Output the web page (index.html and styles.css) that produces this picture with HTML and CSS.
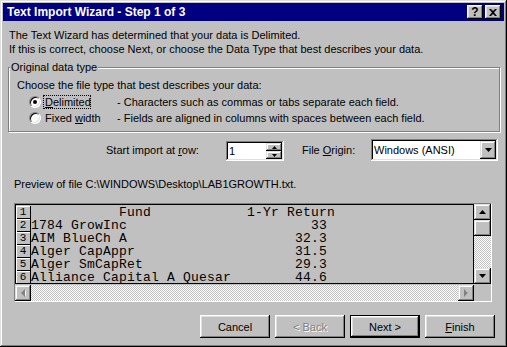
FILE: index.html
```html
<!DOCTYPE html>
<html lang="en">
<head>
  <meta charset="UTF-8">
  <title>Text Import Wizard - Step 1 of 3</title>
  <link rel="stylesheet" href="styles.css">
</head>
<body>

  <div class="window">

    <!-- Title bar -->
    <div class="titlebar">
      <span class="title">Text Import Wizard - Step 1 of 3</span>
      <div class="title-buttons">
        <span class="tbtn help">?</span>
        <span class="tbtn close">
          <svg width="8" height="7" viewBox="0 0 8 7"><path d="M0 0h2l2 2 2-2h2L5 3.5 8 7H6L4 5 2 7H0l3-3.5z" fill="#000"/></svg>
        </span>
      </div>
    </div>

    <div class="intro">
      <p>The Text Wizard has determined that your data is Delimited.</p>
      <p>If this is correct, choose Next, or choose the Data Type that best describes your data.</p>
    </div>

    <!-- Original data type -->
    <fieldset class="group">
      <legend>Original data type</legend>
      <div class="group-body">
        <p>Choose the file type that best describes your data:</p>
        <div class="option">
          <span class="radio checked"></span>
          <span class="opt-label focus"><u>D</u>elimited</span>
          <span class="opt-desc">- Characters such as commas or tabs separate each field.</span>
        </div>
        <div class="option">
          <span class="radio"></span>
          <span class="opt-label">Fixed <u>w</u>idth</span>
          <span class="opt-desc">- Fields are aligned in columns with spaces between each field.</span>
        </div>
      </div>
    </fieldset>

    <div class="import-row">
      <span class="start-label">Start import at <u>r</u>ow:</span>
      <div class="spinner">
        <span class="field-text">1</span>
        <div class="spin-buttons">
          <span class="spin-btn"><svg width="5" height="3" viewBox="0 0 5 3"><path d="M2.5 0L5 3H0z" fill="#000"/></svg></span>
          <span class="spin-btn"><svg width="5" height="3" viewBox="0 0 5 3"><path d="M0 0h5L2.5 3z" fill="#000"/></svg></span>
        </div>
      </div>
      <span class="origin-label">File <u>O</u>rigin:</span>
      <div class="dropdown">
        <span class="field-text">Windows (ANSI)</span>
        <span class="drop-btn"><svg width="7" height="4" viewBox="0 0 7 4"><path d="M0 0h7L3.5 4z" fill="#000"/></svg></span>
      </div>
    </div>

    <p class="preview-label">Preview of file C:\WINDOWS\Desktop\LAB1GROWTH.txt.</p>

    <!-- Preview grid -->
    <div class="preview">
      <div class="data">
        <div class="line"><span class="num">1</span><span class="cells">           Fund            1-Yr Return</span></div>
        <div class="line"><span class="num">2</span><span class="cells">1784 GrowInc                       33</span></div>
        <div class="line"><span class="num">3</span><span class="cells">AIM BlueCh A                     32.3</span></div>
        <div class="line"><span class="num">4</span><span class="cells">Alger CapAppr                    31.5</span></div>
        <div class="line"><span class="num">5</span><span class="cells">Alger SmCapRet                   29.3</span></div>
        <div class="line"><span class="num">6</span><span class="cells">Alliance Capital A Quesar        44.6</span></div>
      </div>
      <div class="vscroll">
        <span class="sb-btn"><svg width="7" height="4" viewBox="0 0 7 4"><path d="M3.5 0L7 4H0z" fill="#000"/></svg></span>
        <span class="sb-btn thumb"></span>
        <span class="trough"></span>
        <span class="sb-btn"><svg width="7" height="4" viewBox="0 0 7 4"><path d="M0 0h7L3.5 4z" fill="#000"/></svg></span>
      </div>
      <div class="hscroll">
        <span class="sb-btn"><svg width="5" height="8" viewBox="0 0 5 8"><path d="M5 1L2 4l3 3z" fill="#fff"/><path d="M4 0L0 4l4 4z" fill="#808080"/></svg></span>
        <span class="trough"></span>
        <span class="sb-btn"><svg width="5" height="8" viewBox="0 0 5 8"><path d="M1 1l3 3-3 3z" fill="#fff"/><path d="M0 0l4 4-4 4z" fill="#808080"/></svg></span>
      </div>
      <div class="corner"></div>
    </div>

    <div class="buttons">
      <button class="button">Cancel</button>
      <button class="button disabled">&lt; Back</button>
      <button class="button default">Next &gt;</button>
      <button class="button"><u>F</u>inish</button>
    </div>

  </div>

</body>
</html>
```

FILE: styles.css
```css
body {
  margin: 0;
  padding: 0;
  font-family: "Liberation Sans", Arial, sans-serif;
  font-size: 11px;
  line-height: 14px;
  color: #000;
  background: #c0c0c0;
}

p {
  margin: 0;
}

.window {
  width: 507px;
  height: 347px;
  box-sizing: border-box;
  padding: 3px;
  background: #c0c0c0;
  display: flex;
  flex-direction: column;
  box-shadow: inset -1px -1px #000, inset 1px 1px #dfdfdf, inset -2px -2px #808080, inset 2px 2px #fff;
}

/* Title bar */
.titlebar {
  height: 18px;
  background: #000080;
  display: flex;
  align-items: center;
  justify-content: space-between;
  padding: 0 3px 0 4px;
}

.title {
  color: #fff;
  font-weight: bold;
  font-size: 12px;
}

.title-buttons {
  display: flex;
  gap: 2px;
}

.tbtn {
  width: 16px;
  height: 14px;
  background: #c0c0c0;
  display: flex;
  align-items: center;
  justify-content: center;
  box-sizing: border-box;
  box-shadow: inset -1px -1px #000, inset 1px 1px #fff, inset -2px -2px #808080, inset 2px 2px #dfdfdf;
}

.help {
  font-weight: bold;
  font-size: 12px;
  line-height: 14px;
}

.intro {
  margin: 7px 0 0 6px;
}

/* Group box */
.group {
  margin: 4px 4px 0 5px;
  padding: 0;
  border: 1px solid #808080;
  box-shadow: inset 1px 1px #fff, 1px 1px #fff;
}

.group legend {
  margin-left: 1px;
  padding: 0 1px;
  background: #c0c0c0;
}

.group-body {
  padding: 4px 8px 5px 8px;
}

.option {
  height: 16px;
  display: flex;
  align-items: center;
}

.option:first-of-type {
  margin-top: 2px;
}

.radio {
  width: 12px;
  height: 12px;
  margin-left: 12px;
  box-sizing: border-box;
  border-radius: 50%;
  background: #fff;
  border: 1px solid;
  border-color: #808080 #fff #fff #808080;
  box-shadow: inset 1px 1px #000, inset -1px -1px #dfdfdf;
  display: flex;
  align-items: center;
  justify-content: center;
}

.radio.checked::after {
  content: "";
  width: 4px;
  height: 4px;
  border-radius: 50%;
  background: #000;
}

.opt-label {
  width: 48px;
  margin-left: 2px;
  padding: 0 1px;
  box-sizing: border-box;
  border: 1px dotted transparent;
  line-height: 12px;
  white-space: nowrap;
}

.opt-label.focus {
  border-color: #000;
}

.opt-desc {
  margin-left: 26px;
  white-space: nowrap;
}

/* Start import row */
.import-row {
  margin: 7px 0 0 103px;
  height: 22px;
  display: flex;
  align-items: flex-start;
  line-height: 22px;
}

.start-label {
  width: 120px;
}

.spinner,
.dropdown {
  background: #fff;
  box-sizing: border-box;
  display: flex;
  align-items: stretch;
  padding: 2px;
  box-shadow: inset -1px -1px #fff, inset 1px 1px #808080, inset -2px -2px #dfdfdf, inset 2px 2px #000;
  line-height: 16px;
}

.spinner {
  width: 58px;
  height: 20px;
  margin-top: 2px;
}

.field-text {
  flex: 1;
  padding-left: 1px;
}

.spin-buttons {
  width: 16px;
  display: flex;
  flex-direction: column;
}

.spin-btn,
.sb-btn,
.drop-btn {
  background: #c0c0c0;
  display: flex;
  align-items: center;
  justify-content: center;
  box-sizing: border-box;
  box-shadow: inset -1px -1px #000, inset 1px 1px #dfdfdf, inset -2px -2px #808080, inset 2px 2px #fff;
}

.spin-btn {
  flex: 1;
}

.origin-label {
  margin-left: 18px;
  width: 69px;
}

.dropdown {
  width: 127px;
  height: 22px;
  line-height: 18px;
}

.drop-btn {
  width: 16px;
}

.preview-label {
  margin: 16px 0 0 11px;
}

/* Preview grid */
.preview {
  margin: 12px 0 0 11px;
  width: 478px;
  height: 99px;
  box-sizing: border-box;
  border: 1px solid;
  border-color: #808080 #fff #fff #808080;
  display: grid;
  grid-template-columns: 1fr 17px;
  grid-template-rows: 80px 17px;
}

.data {
  border: 1px solid #000;
  padding-top: 1px;
  overflow: hidden;
  font-family: "Liberation Mono", "Courier New", monospace;
  font-size: 13px;
  letter-spacing: 0.2px;
  line-height: 13px;
}

.line {
  display: flex;
  height: 13px;
}

.num {
  width: 15px;
  flex: none;
  text-align: center;
  font-size: 11px;
  letter-spacing: 0;
  box-sizing: border-box;
  border-right: 1px solid #000;
  box-shadow: inset 1px 1px #fff, inset 0 -1px #000;
}

.cells {
  white-space: pre;
}

.vscroll {
  display: flex;
  flex-direction: column;
}

.vscroll .sb-btn {
  height: 16px;
}

.trough {
  flex: 1;
  background: repeating-conic-gradient(#fff 0 25%, #c0c0c0 0 50%) 0 0 / 2px 2px;
}

.hscroll {
  display: flex;
  padding-top: 1px;
}

.hscroll .sb-btn {
  width: 16px;
}

.corner {
  background: #c0c0c0;
}

/* Buttons */
.buttons {
  margin: 13px 9px 0 0;
  display: flex;
  justify-content: flex-end;
  gap: 5px;
}

.button {
  width: 70px;
  height: 23px;
  padding: 0;
  border: none;
  background: #c0c0c0;
  font-family: "Liberation Sans", Arial, sans-serif;
  font-size: 11px;
  color: #000;
  box-shadow: inset -1px -1px #000, inset 1px 1px #fff, inset -2px -2px #808080, inset 2px 2px #dfdfdf;
}

.button.default {
  border: 1px solid #000;
}

.button.disabled {
  color: #808080;
  text-shadow: 1px 1px #fff;
}
```
